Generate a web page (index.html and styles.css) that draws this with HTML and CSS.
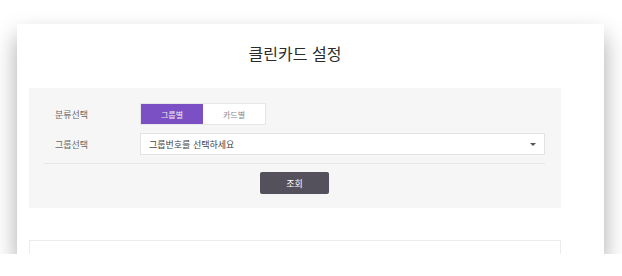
FILE: index.html
```html
<!DOCTYPE html>
<html lang="ko">
<head>
  <meta charset="UTF-8">
  <title>클린카드 설정</title>
  <link rel="stylesheet" href="styles.css">
</head>
<body>
  <div class="card">
    <div class="content">
      <h1 class="title">클린카드 설정</h1>
      <div class="search-panel">
        <div class="row">
          <div class="label">분류선택</div>
          <div class="seg">
            <button class="seg-btn active">그룹별</button>
            <button class="seg-btn">카드별</button>
          </div>
        </div>
        <div class="row">
          <div class="label">그룹선택</div>
          <div class="select">
            <span>그룹번호를 선택하세요</span>
            <span class="caret"></span>
          </div>
        </div>
        <div class="actions">
          <button class="search-btn">조회</button>
        </div>
      </div>
      <div class="result-box"></div>
    </div>
  </div>
</body>
</html>
```

FILE: styles.css
```css
* { margin: 0; padding: 0; box-sizing: border-box; }
body {
  background: #fff;
  font-family: "Noto Sans CJK KR", "Noto Sans", sans-serif;
  color: #333;
  padding: 24px 0 0 17px;
}
.card {
  width: 587px;
  height: 230px;
  background: #fff;
  overflow: hidden;
  box-shadow: 0 12px 22px rgba(0, 0, 0, 0.34);
}
.content {
  width: 532px;
  margin-left: 12px;
  padding-top: 17px;
}
.title {
  font-size: 16px;
  font-weight: 400;
  line-height: 24px;
  text-align: center;
  color: #2b2b2b;
  margin-bottom: 23px;
}
.search-panel {
  background: #f6f6f6;
  height: 120px;
  padding: 15px 16px 0 15px;
}
.row {
  display: flex;
  align-items: center;
  margin-bottom: 8px;
}
.label {
  width: 96px;
  padding-left: 11px;
  font-size: 9px;
  color: #666;
}
.seg {
  display: flex;
  height: 22px;
  border: 1px solid #e6e6e6;
  background: #fff;
}
.seg-btn {
  width: 62px;
  border: none;
  background: #fff;
  color: #888;
  font-family: inherit;
  font-size: 8px;
}
.seg-btn.active {
  background: #7b50c4;
  color: #eee;
}
.select {
  flex: 1;
  height: 22px;
  border: 1px solid #e3e3e3;
  background: #fff;
  display: flex;
  align-items: center;
  justify-content: space-between;
  padding: 0 8px 0 8px;
  font-size: 9px;
  color: #444;
}
.caret {
  width: 0;
  height: 0;
  border-left: 3px solid transparent;
  border-right: 3px solid transparent;
  border-top: 3px solid #555;
}
.actions {
  border-top: 1px solid #e6e6e6;
  padding-top: 8px;
  display: flex;
  justify-content: center;
}
.search-btn {
  width: 69px;
  height: 22px;
  border: none;
  border-radius: 2px;
  background: #54505c;
  color: #fff;
  font-family: inherit;
  font-size: 9px;
}
.result-box {
  margin-top: 32px;
  height: 60px;
  border: 1px solid #ececec;
}
```
